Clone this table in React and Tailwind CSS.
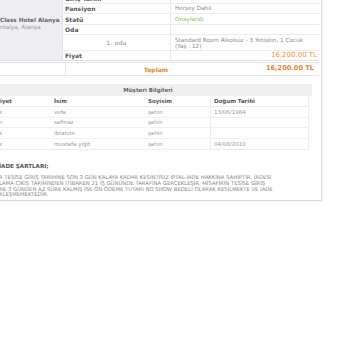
import React from 'react';

const guests = [
  { gender: 'Erkek', name: 'vefa', surname: 'şahin', birth: '13/06/1984' },
  { gender: 'Kadın', name: 'safinaz', surname: 'şahin', birth: '' },
  { gender: 'Erkek', name: 'ibrahim', surname: 'şahin', birth: '' },
  { gender: 'Erkek', name: 'mustafa yiğit', surname: 'şahin', birth: '04/08/2010' },
];

const InfoRow = ({ label, children, h, center }) => (
  <div className={`flex border-b border-[#ebebeb] ${h}`}>
    <div
      className={`w-[108px] shrink-0 flex items-center border-l border-[#e2e2e2] px-[2px] text-[6px] font-bold text-[#555] ${
        center ? 'justify-center font-normal text-[5.7px] text-[#888] tracking-[0.3px]' : ''
      }`}
    >
      {label}
    </div>
    <div className="flex-1 flex items-center border-l border-[#ebebeb] px-[4px] text-[5.7px] text-[#8a8a8a]">
      {children}
    </div>
  </div>
);

export default function App() {
  return (
    <div className="w-[350px] h-[350px] overflow-hidden bg-white font-['DejaVu_Sans',Verdana,sans-serif]">
      <div className="w-[342px] -ml-[20px] -mt-[6px] border-r border-b border-[#dadada] shadow-[1px_1px_2px_rgba(0,0,0,0.06)] pr-[2px] pb-[2px]">
        {/* reservation details */}
        <div className="flex border-b border-[#e0e0e0]">
          <div className="w-[82px] shrink-0 bg-[#eeeef2] flex flex-col justify-center pb-[7px] pl-[16px] text-[5.7px] leading-[6.5px]">
            <div className="ml-[4px] font-bold text-[#666] whitespace-nowrap">Class Hotel Alanya</div>
            <div className="text-[#999] whitespace-nowrap">Antalya, Alanya</div>
          </div>
          <div className="flex-1">
            <InfoRow label="Giriş Tarihi" h="h-[10px]">01/07/2020 - 08/07/2020</InfoRow>
            <InfoRow label="Pansiyon" h="h-[10px]">Herşey Dahil</InfoRow>
            <InfoRow label="Statü" h="h-[11px]">
              <span className="text-[#8cc152]">Onaylandı</span>
            </InfoRow>
            <InfoRow label="Oda" h="h-[10px]"> </InfoRow>
            <InfoRow label="1. oda" h="h-[16px]" center>
              <div className="leading-[6px]">
                Standard Room Alkolsüz - 3 Yetişkin, 1 Çocuk
                <br />
                (Yaş : 12)
              </div>
            </InfoRow>
            <div className="flex h-[9px]">
              <div className="w-[108px] shrink-0 flex items-center border-l border-[#e2e2e2] px-[2px] text-[6px] font-bold text-[#555]">
                Fiyat
              </div>
              <div className="flex-1 flex items-center justify-end border-l border-[#ebebeb] px-[2px] text-[7px] text-[#e8924a]">
                16,200.00 TL
              </div>
            </div>
          </div>
        </div>

        {/* total */}
        <div className="flex h-[14px] mt-[1px] border-t border-b border-[#e6e6e6]">
          <div className="w-[85px] shrink-0" />
          <div className="w-[105px] shrink-0 flex items-center justify-end border-l border-[#e6e6e6] px-[2px] text-[6px] font-bold text-[#e8822a]">
            Toplam
          </div>
          <div className="flex-1 flex items-center justify-end px-[5px] text-[6.6px] font-bold text-[#e8822a]">
            16,200.00 TL
          </div>
        </div>

        {/* guests */}
        <div className="ml-[4px] mt-[8px] w-[328px]">
          <div className="h-[12px] bg-[#f0f0f0] flex items-center justify-center text-[5.5px] font-bold text-[#666]">
            Müşteri Bilgileri
          </div>
          <div className="border-r border-b border-[#ececec] mr-[3px] text-[5.5px]">
            <div className="flex h-[11px] border-b border-[#ececec] font-bold text-[#555]">
              <div className="w-[67px] flex items-center pl-[3px]">Cinsiyet</div>
              <div className="w-[94px] flex items-center pl-[3px]">İsim</div>
              <div className="w-[65px] flex items-center pl-[3px]">Soyisim</div>
              <div className="flex-1 flex items-center pl-[3px] border-l border-[#ececec]">Doğum Tarihi</div>
            </div>
            {guests.map((g, i) => (
              <div key={i} className="flex h-[10.5px] border-b border-[#f0f0f0] last:border-b-0 text-[#999]">
                <div className="w-[67px] flex items-center pl-[3px]">{g.gender}</div>
                <div className="w-[94px] flex items-center pl-[3px]">{g.name}</div>
                <div className="w-[65px] flex items-center pl-[3px]">{g.surname}</div>
                <div className="flex-1 flex items-center pl-[3px] border-l border-[#ececec]">{g.birth}</div>
              </div>
            ))}
          </div>
        </div>

        {/* refund terms */}
        <div className="pl-[19px] mt-[12px]">
          <div className="text-[5.6px] font-bold text-[#555] whitespace-nowrap">İADE ŞARTLARI;</div>
          <div className="mt-[5px] text-[5.3px] leading-[5.6px] text-[#888] whitespace-nowrap">
            <div>R TESİSE GİRİŞ TARİHİNE SON 3 GÜN KALAYA KADAR KESİNTİSİZ İPTAL-İADE HAKKINA SAHİPTİR, İADESİ</div>
            <div>LAMA ÇIKIŞ TARİHİNDEN İTİBAREN 21 İŞ GÜNÜNDE TARAFINA GERÇEKLEŞİR. MİSAFİRİN TESİSE GİRİŞ</div>
            <div>NE 3 GÜNDEN AZ SÜRE KALMIŞ İSE ÖN ÖDEME TUTARI NO SHOW BEDELİ OLARAK KESİLMEKTE VE İADE</div>
            <div>KLEŞMEMEKTEDİR.</div>
          </div>
        </div>
      </div>
    </div>
  );
}
